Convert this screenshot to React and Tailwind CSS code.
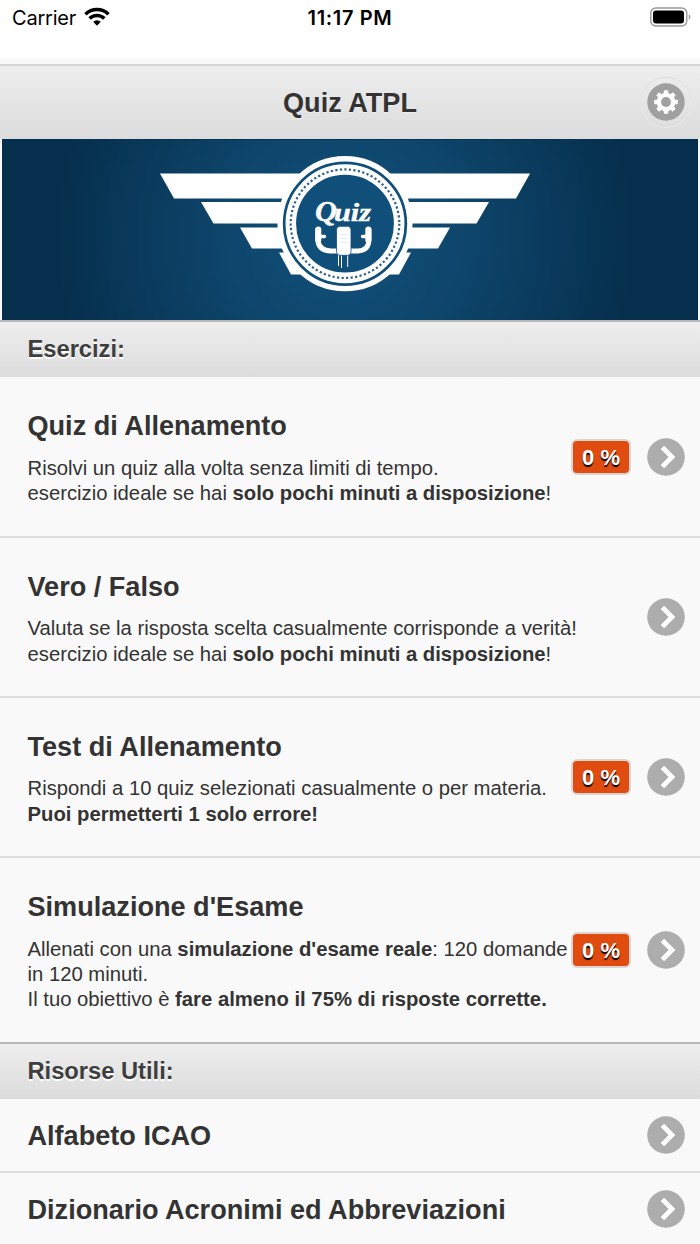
import React from "react";

const exercises = [
  {
    title: "Quiz di Allenamento",
    height: "h-[159px]",
    score: "0 %",
    text: (
      <>
        Risolvi un quiz alla volta senza limiti di tempo.
        <br />
        esercizio ideale se hai <b>solo pochi minuti a disposizione</b>!
      </>
    ),
  },
  {
    title: "Vero / Falso",
    height: "h-[160px]",
    text: (
      <>
        Valuta se la risposta scelta casualmente corrisponde a verità!
        <br />
        esercizio ideale se hai <b>solo pochi minuti a disposizione</b>!
      </>
    ),
  },
  {
    title: "Test di Allenamento",
    height: "h-[160px]",
    score: "0 %",
    text: (
      <>
        Rispondi a 10 quiz selezionati casualmente o per materia.
        <br />
        <b>Puoi permetterti 1 solo errore!</b>
      </>
    ),
  },
  {
    title: "Simulazione d'Esame",
    height: "h-[186px]",
    score: "0 %",
    text: (
      <>
        Allenati con una <b>simulazione d'esame reale</b>: 120 domande
        <br />
        in 120 minuti.
        <br />
        Il tuo obiettivo è <b>fare almeno il 75% di risposte corrette.</b>
      </>
    ),
  },
];

function StatusBar() {
  return (
    <div className="relative flex h-[59px] items-start justify-between bg-white pl-3 pr-[9px] pt-1.5 font-['Inter',sans-serif] text-[20px] leading-6 text-black">
      <div className="flex items-center gap-2">
        <span className="tracking-[-0.2px]">Carrier</span>
        <svg className="-mt-1 h-[19px] w-[26px]" viewBox="0 0 26 19">
          <g fill="none" stroke="#000" strokeWidth="3.6">
            <path d="M1.5 7.2a16.6 16.6 0 0 1 23 0" />
            <path d="M5.6 11.5a10.6 10.6 0 0 1 14.8 0" />
          </g>
          <path d="M9.2 14.8a5.4 5.4 0 0 1 7.6 0L13 18.7z" />
        </svg>
      </div>
      <span className="absolute left-0 right-0 text-center text-[20px] font-semibold tracking-[0.65px]">11:17 PM</span>
      <svg className="mt-px h-5 w-[41px]" viewBox="0 0 41 20">
        <rect x="0.8" y="1" width="36" height="18" rx="5" fill="none" stroke="#999" strokeWidth="1.4" />
        <rect x="3" y="3.6" width="31" height="12.8" rx="3" />
        <path d="M38.8 7.2c2 .7 2 4.9 0 5.6z" fill="#999" />
      </svg>
    </div>
  );
}

function Gear() {
  return (
    <svg className="-mt-[2px] h-[50px] w-[50px] overflow-visible" viewBox="0 0 50 50">
      <circle cx="25" cy="25" r="24.5" fill="none" stroke="#d6d6d6" />
      <circle cx="25" cy="25.8" r="24.5" fill="none" stroke="#f1f1f1" strokeWidth="0.8" />
      <circle cx="25" cy="25" r="18.7" fill="#a0a0a0" />
      <g fill="#fff">
        {[0, 45, 90, 135].map((angle) => (
          <rect key={angle} x="22.8" y="13.2" width="4.4" height="23.6" rx="0.8" transform={`rotate(${angle} 25 25)`} />
        ))}
        <circle cx="25" cy="25" r="9.3" />
      </g>
      <circle cx="25" cy="25" r="4.9" fill="#a0a0a0" />
    </svg>
  );
}

function Arrow() {
  return (
    <svg className="h-[38px] w-[38px] shrink-0" viewBox="0 0 38 38">
      <circle cx="19" cy="19" r="18.8" fill="#adadad" />
      <path d="M15.4 9.4 25 19 15.4 28.6" fill="none" stroke="#fff" strokeWidth="4.8" />
    </svg>
  );
}

function Banner() {
  return (
    <svg className="block h-[181px] w-full px-0.5" viewBox="2 139 696 181" preserveAspectRatio="none">
      <defs>
        <radialGradient id="sky" gradientUnits="userSpaceOnUse" cx="345" cy="237" r="290">
          <stop offset="0" stopColor="#10507b" />
          <stop offset="0.4" stopColor="#0e466c" />
          <stop offset="1" stopColor="#062f4d" />
        </radialGradient>
      </defs>
      <rect x="2" y="139" width="696" height="181" fill="url(#sky)" />
      <g fill="#fff">
        <path d="M160 173.5H530L516 198.5H174z" />
        <path d="M201 202H489L476.5 223.5H213.5z" />
        <path d="M240 227.5H450L438 248.5H252z" />
        <path d="M279 252.5H411L399 274.5H291z" />
      </g>
      <circle cx="345" cy="223.7" r="65" fill="#104f79" />
      <circle cx="345" cy="223.7" r="64.9" fill="none" stroke="#fff" strokeWidth="5.4" />
      <circle cx="345" cy="223.7" r="54.2" fill="none" stroke="#fff" strokeWidth="10.6" />
      <circle cx="345" cy="223.7" r="54.3" fill="none" stroke="#2b618a" strokeWidth="2.2" strokeDasharray="2.2 2.35" />
      <g fill="#fff" stroke="#fff" fontFamily="Liberation Serif, serif" fontStyle="italic" fontWeight="bold">
        <text x="315" y="220.5" strokeWidth="0.3" fontSize="29" textLength="22" lengthAdjust="spacingAndGlyphs">
          Q
        </text>
        <text x="334" y="220.5" strokeWidth="0.4" fontSize="26" textLength="37" lengthAdjust="spacingAndGlyphs">
          uiz
        </text>
      </g>
      {/* yoke */}
      <g fill="none" stroke="#fff" strokeLinecap="round">
        <path d="M317.8 229.5V240Q318.5 250.5 331 251H358Q368.5 250.5 369 240V229.5" strokeWidth="5" />
        <path d="M318.3 229.5V240M368.3 229.5V240" strokeWidth="6" />
        <path d="M320 236.5H324.5M366.5 236.5H362.5" strokeWidth="3.4" />
      </g>
      <path d="M338.5 254V266M341.5 254V268M347.7 254V267" stroke="#fff" strokeWidth="1" />
      <rect x="336.5" y="226.3" width="14.5" height="29" rx="3.5" fill="#fff" stroke="#104f79" strokeWidth="0.8" />
      <path d="M338.5 234.5H349M338.5 238.5H349M338.5 242.5H349" stroke="#e1e9ef" strokeWidth="0.7" />
      <rect x="2" y="139" width="696" height="1" fill="#063355" />
    </svg>
  );
}

function Divider({ children }) {
  return (
    <div className="flex h-[57px] items-center border-t-2 border-[#b7b7b7] bg-linear-to-b from-[#eeeeee] to-[#dcdcdc] pl-[27.5px] text-[23.7px] font-bold text-[#3e3e3e] [text-shadow:0_1.5px_0_#fff]">
      {children}
    </div>
  );
}

function App() {
  return (
    <div className="h-[1244px] w-[700px] overflow-hidden bg-[#f9f9f9] font-['Liberation_Sans',sans-serif] text-[#333]">
      <StatusBar />
      <header className="mt-[5px] flex h-[75px] items-center border-t-2 border-[#d6d6d6] bg-linear-to-b from-[#eeeeee] to-[#dcdcdc] pl-[59px] pr-[9px]">
        <h1 className="flex-1 pt-0.5 text-center text-[27.1px] font-bold [text-shadow:0_1px_0_#eee]">Quiz ATPL</h1>
        <Gear />
      </header>
      <Banner />

      <Divider>Esercizi:</Divider>
      <ul>
        {exercises.map((item, index) => (
          <li
            key={item.title}
            className={`${item.height} ${index > 0 ? "border-t-2 border-[#dddddd]" : ""} flex items-center justify-between pl-[27.5px] pr-[15px]`}
          >
            <div className="min-w-0 whitespace-nowrap pt-[3px]">
              <h2 className="text-[27.1px] font-bold leading-[34px]">{item.title}</h2>
              <p className="mt-[12.5px] text-[20.28px] leading-[25.3px]">{item.text}</p>
            </div>
            <div className="flex items-center gap-4">
              {item.score && (
                <span className="flex h-[36px] w-[60px] items-center justify-center rounded-[6px] border-2 border-[#dcd6d3] bg-[#e04c10] pt-px text-[22px] font-bold text-white [text-shadow:0_2px_1px_#000]">
                  {item.score}
                </span>
              )}
              <Arrow />
            </div>
          </li>
        ))}
      </ul>

      <Divider>Risorse Utili:</Divider>
      <ul>
        {["Alfabeto ICAO", "Dizionario Acronimi ed Abbreviazioni"].map((title) => (
          <li key={title} className="flex h-[74px] items-center justify-between border-b-2 border-[#dddddd] pl-[27.5px] pr-[15px]">
            <h2 className="pt-[3px] text-[27.1px] font-bold">{title}</h2>
            <Arrow />
          </li>
        ))}
      </ul>
    </div>
  );
}

export default App;
